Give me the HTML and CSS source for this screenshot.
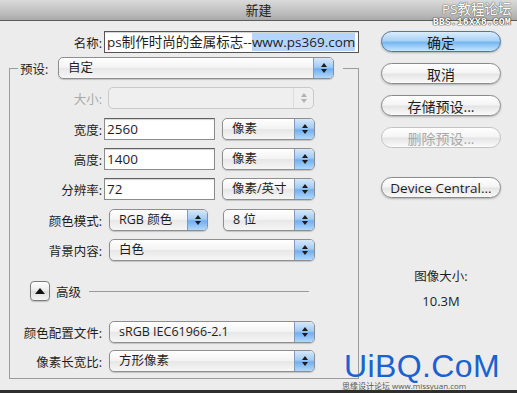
FILE: index.html
```html
<!DOCTYPE html>
<html lang="zh-CN">
<head>
    <meta charset="UTF-8">
    <title>新建</title>
    <link rel="stylesheet" href="styles.css">
</head>
<body>

    <div class="window">
        <div class="titlebar">新建</div>

        <div class="content">
            <div class="main">
                <div class="name-row">
                    <label class="name-label" for="nameInput">名称:</label>
                    <div class="field name-field" id="nameInput">ps制作时尚的金属标志--<span class="selected">www.ps369.com</span></div>
                </div>

                <fieldset class="preset">
                    <legend class="preset-legend">
                        <span class="preset-label">预设:</span>
                        <div class="popup popup-preset"><span class="popup-text">自定</span><span class="popup-arrows"></span></div>
                    </legend>

                    <div class="row">
                        <span class="row-label is-disabled">大小:</span>
                        <div class="popup popup-size is-disabled"><span class="popup-text"></span><span class="popup-arrows"></span></div>
                    </div>
                    <div class="row row-loose">
                        <span class="row-label">宽度:</span>
                        <div class="field num-field">2560</div>
                        <div class="popup popup-unit"><span class="popup-text">像素</span><span class="popup-arrows"></span></div>
                    </div>
                    <div class="row">
                        <span class="row-label">高度:</span>
                        <div class="field num-field">1400</div>
                        <div class="popup popup-unit"><span class="popup-text">像素</span><span class="popup-arrows"></span></div>
                    </div>
                    <div class="row">
                        <span class="row-label">分辨率:</span>
                        <div class="field num-field">72</div>
                        <div class="popup popup-unit"><span class="popup-text">像素/英寸</span><span class="popup-arrows"></span></div>
                    </div>
                    <div class="row row-loose">
                        <span class="row-label">颜色模式:</span>
                        <div class="popup popup-mode"><span class="popup-text">RGB 颜色</span><span class="popup-arrows"></span></div>
                        <div class="popup popup-bits"><span class="popup-text">8 位</span><span class="popup-arrows"></span></div>
                    </div>
                    <div class="row">
                        <span class="row-label">背景内容:</span>
                        <div class="popup popup-full"><span class="popup-text">白色</span><span class="popup-arrows"></span></div>
                    </div>

                    <div class="advanced">
                        <span class="disclosure"></span>
                        <span class="advanced-label">高级</span>
                        <span class="advanced-line"></span>
                    </div>

                    <div class="row row-profile">
                        <span class="row-label">颜色配置文件:</span>
                        <div class="popup popup-full"><span class="popup-text">sRGB IEC61966-2.1</span><span class="popup-arrows"></span></div>
                    </div>
                    <div class="row row-aspect">
                        <span class="row-label">像素长宽比:</span>
                        <div class="popup popup-full"><span class="popup-text">方形像素</span><span class="popup-arrows"></span></div>
                    </div>
                </fieldset>
            </div>

            <div class="side">
                <div class="btn btn-default">确定</div>
                <div class="btn">取消</div>
                <div class="btn">存储预设...</div>
                <div class="btn is-disabled">删除预设...</div>
                <div class="btn btn-device">Device Central...</div>

                <div class="image-size">
                    <div class="image-size-label">图像大小:</div>
                    <div class="image-size-value">10.3M</div>
                </div>
            </div>
        </div>

        <div class="bottom-bar"></div>

        <!-- 水印 -->
        <div class="mark-top">
            <div class="mark-top-name">PS教程论坛</div>
            <div class="mark-top-url">BBS.16XX8.COM</div>
        </div>
        <div class="mark-small">思缘设计论坛 www.missyuan.com</div>
        <div class="mark-big">UiBQ.CoM</div>
    </div>

</body>
</html>
```

FILE: styles.css
```css
/* 色彩 */
:root {
    --window-bg: #ececec;
    --text-color: #1e1e1e;
    --disabled-color: #a9a9a9;
    --group-border: #9c9c9c;
    --control-border: #8c8c8c;
    --select-color: #b5d5ff;
}

body {
    margin: 0;
    font-family: "Open Sans", "Noto Sans CJK SC", sans-serif;
    color: var(--text-color);
    background-color: var(--window-bg);
}

.window {
    position: relative;
    width: 517px;
    height: 393px;
    overflow: hidden;
    background-color: var(--window-bg);
    display: flex;
    flex-direction: column;
}

.titlebar {
    height: 20px;
    line-height: 21px;
    text-align: center;
    font-size: 13px;
    color: #222;
    background: linear-gradient(#dadada, #c4c4c4 50%, #aaaaaa);
    border-bottom: 1px solid #5c5c5c;
    flex: 0 0 auto;
}

.content {
    flex: 1;
    display: flex;
    padding-top: 10px;
}

.main {
    flex: 0 0 368px;
}

/* 名称 */
.name-row {
    display: flex;
    align-items: center;
}

.name-label {
    width: 102px;
    padding-right: 2px;
    text-align: right;
    font-size: 12.5px;
}

.field {
    height: 22px;
    box-sizing: border-box;
    border: 1px solid var(--control-border);
    border-top-color: #606060;
    background-color: #fff;
    box-shadow: inset 0 1px 1px rgba(0, 0, 0, 0.18);
    font-size: 13.5px;
    line-height: 20px;
    padding: 0 2px;
    white-space: nowrap;
    overflow: hidden;
}

.name-field {
    width: 255px;
    border-color: #555;
}

.selected {
    background-color: var(--select-color);
}

.num-field {
    width: 111px;
}

/* 预设分组 */
.preset {
    margin: 4px 0 0 9px;
    width: 350px;
    box-sizing: border-box;
    border: 1px solid var(--group-border);
    padding: 8px 0 6px 0;
    min-width: 0;
}

.preset-legend {
    margin-left: 8px;
    padding: 0 9px 0 2px;
    display: flex;
    align-items: center;
}

.preset-label {
    font-size: 12.5px;
    width: 38px;
}

.row {
    display: flex;
    align-items: center;
    height: 22px;
    margin-top: 8px;
}

.row:first-of-type {
    margin-top: 0;
}

.row-loose {
    margin-top: 9px;
}

.row-label {
    width: 94px;
    padding-right: 2px;
    box-sizing: border-box;
    text-align: right;
    font-size: 12.5px;
    white-space: nowrap;
}

.row-label.is-disabled {
    color: var(--disabled-color);
}

/* 弹出菜单 */
.popup {
    display: flex;
    align-items: center;
    height: 22px;
    box-sizing: border-box;
    border: 1px solid #8e8e8e;
    border-radius: 5px;
    background: linear-gradient(#ffffff, #f3f3f3 48%, #e7e7e7 52%, #f6f6f6);
    box-shadow: 0 1px 1px rgba(0, 0, 0, 0.18);
    overflow: hidden;
}

.popup-text {
    flex: 1;
    padding-left: 9px;
    font-size: 12.5px;
    line-height: 20px;
    white-space: nowrap;
}

.popup-arrows {
    width: 19px;
    align-self: stretch;
    border-left: 1px solid #7b9cc5;
    background: linear-gradient(#d6e8f9, #a3cbf3 45%, #72afef 55%, #b1d8fb);
    display: flex;
    flex-direction: column;
    align-items: center;
    justify-content: center;
    gap: 2px;
}

.popup-arrows::before {
    content: "";
    border-left: 3px solid transparent;
    border-right: 3px solid transparent;
    border-bottom: 4px solid #1c1c1c;
}

.popup-arrows::after {
    content: "";
    border-left: 3px solid transparent;
    border-right: 3px solid transparent;
    border-top: 4px solid #1c1c1c;
}

.popup.is-disabled {
    border-color: #c9c9c9;
    background: #efefef;
    box-shadow: none;
}

.popup.is-disabled .popup-arrows {
    background: none;
    border-left-color: #dcdcdc;
}

.popup.is-disabled .popup-arrows::before {
    border-bottom-color: #b2b2b2;
}

.popup.is-disabled .popup-arrows::after {
    border-top-color: #b2b2b2;
}

.popup-preset {
    width: 276px;
}

.popup-size {
    width: 206px;
    margin-left: 4px;
}

.popup-unit {
    width: 93px;
    margin-left: 7px;
}

.popup-mode {
    width: 99px;
    margin-left: 5px;
}

.popup-bits {
    width: 92px;
    margin-left: 15px;
}

.popup-full {
    width: 206px;
    margin-left: 5px;
}

/* 高级 */
.advanced {
    display: flex;
    align-items: center;
    height: 20px;
    margin-top: 20px;
    padding-left: 20px;
}

.disclosure {
    width: 20px;
    height: 20px;
    box-sizing: border-box;
    border: 1px solid #7c7c7c;
    border-radius: 4px;
    background: linear-gradient(#ffffff, #e9e9e9 50%, #dedede 52%, #f4f4f4);
    box-shadow: 0 1px 1px rgba(0, 0, 0, 0.2);
    display: flex;
    align-items: center;
    justify-content: center;
}

.disclosure::before {
    content: "";
    border-left: 5px solid transparent;
    border-right: 5px solid transparent;
    border-bottom: 6px solid #111;
    margin-top: -1px;
}

.advanced-label {
    font-size: 12.5px;
    margin-left: 6px;
}

.advanced-line {
    width: 220px;
    height: 1px;
    background-color: #9a9a9a;
    margin-left: 8px;
}

.row-profile {
    margin-top: 20px;
}

.row-aspect {
    margin-top: 7px;
}

/* 右侧按钮 */
.side {
    width: 120px;
    margin-left: 13px;
    display: flex;
    flex-direction: column;
}

.btn {
    height: 21px;
    box-sizing: border-box;
    border: 1px solid #8b8b8b;
    border-radius: 11px;
    background: linear-gradient(#ffffff, #f4f4f4 48%, #e4e4e4 52%, #fbfbfb);
    box-shadow: 0 1px 2px rgba(0, 0, 0, 0.25);
    display: flex;
    align-items: center;
    justify-content: center;
    font-size: 14px;
    margin-bottom: 11px;
    white-space: nowrap;
}

.btn-default {
    border-color: #53749c;
    background: linear-gradient(#dcedfc, #a9d2f6 45%, #77b7f1 55%, #c5e6fe);
}

.btn.is-disabled {
    color: var(--disabled-color);
    border-color: #c3c3c3;
    box-shadow: none;
}

.btn-device {
    margin-top: 18px;
    font-size: 13.5px;
}

.image-size {
    margin-top: 60px;
    text-align: center;
    font-size: 12.5px;
}

.image-size-label {
    line-height: 16px;
}

.image-size-value {
    line-height: 16px;
    margin-top: 8px;
    font-size: 13px;
}

.bottom-bar {
    height: 3px;
    background-color: #2e2e2e;
    flex: 0 0 auto;
}

/* 水印 */
.mark-top {
    position: absolute;
    top: 1px;
    left: 432px;
    text-align: center;
    color: #fff;
}

.mark-top-name {
    font-size: 13.5px;
    line-height: 16px;
    padding-left: 10px;
    text-shadow: 0 0 1px #666, 0 0 1px #666, 0 0 1px #666;
}

.mark-top-url {
    font-family: "Liberation Mono", monospace;
    font-size: 10px;
    font-weight: bold;
    line-height: 11px;
    text-shadow: 0 0 1px #333, 0 0 1px #333, 0 0 1px #333;
}

.mark-small {
    position: absolute;
    top: 382px;
    left: 342px;
    font-size: 8px;
    line-height: 8px;
    color: #555;
    white-space: nowrap;
}

.mark-big {
    position: absolute;
    top: 353px;
    left: 344px;
    font-family: "Liberation Sans", Arial, sans-serif;
    font-size: 32px;
    line-height: 26px;
    letter-spacing: 0.4px;
    color: #1a62d2;
}
```
